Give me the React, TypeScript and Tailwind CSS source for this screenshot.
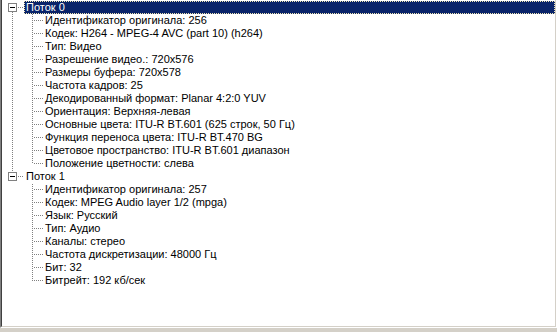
import React from "react";

type Node = { label: string; children: string[] };

const data: Node[] = [
  {
    label: "Поток 0",
    children: [
      "Идентификатор оригинала: 256",
      "Кодек: H264 - MPEG-4 AVC (part 10) (h264)",
      "Тип: Видео",
      "Разрешение видео.: 720x576",
      "Размеры буфера: 720x578",
      "Частота кадров: 25",
      "Декодированный формат: Planar 4:2:0 YUV",
      "Ориентация: Верхняя-левая",
      "Основные цвета: ITU-R BT.601 (625 строк, 50 Гц)",
      "Функция переноса цвета: ITU-R BT.470 BG",
      "Цветовое пространство: ITU-R BT.601 диапазон",
      "Положение цветности: слева",
    ],
  },
  {
    label: "Поток 1",
    children: [
      "Идентификатор оригинала: 257",
      "Кодек: MPEG Audio layer 1/2 (mpga)",
      "Язык: Русский",
      "Тип: Аудио",
      "Каналы: стерео",
      "Частота дискретизации: 48000 Гц",
      "Бит: 32",
      "Битрейт: 192 кб/сек",
    ],
  },
];

const ROW_H = 13;
const LINE = "#808080";

function vDots(x: number, y0: number, y1: number, rowTop: number, key: string) {
  const out: React.ReactElement[] = [];
  for (let y = y0; y < y1; y++) {
    if ((rowTop + y) % 2 === 0) out.push(<rect key={key + y} x={x} y={y} width={1} height={1} fill={LINE} />);
  }
  return out;
}

function hDots(y: number, x0: number, x1: number, key: string) {
  const out: React.ReactElement[] = [];
  for (let x = x0; x < x1; x++) {
    if (x % 2 === 0) out.push(<rect key={key + x} x={x} y={y} width={1} height={1} fill={LINE} />);
  }
  return out;
}

function RootRow({ label, first, last, selected, rowTop }: { label: string; first: boolean; last: boolean; selected: boolean; rowTop: number }) {
  return (
    <div className="flex h-[13px] items-stretch">
      <svg width={22} height={ROW_H} className="shrink-0" shapeRendering="crispEdges">
        {!first && vDots(10, 0, 2, rowTop, "a")}
        {!last && vDots(10, 11, 13, rowTop, "b")}
        <rect x={6.5} y={2.5} width={8} height={8} fill="#fff" stroke={LINE} strokeWidth={1} />
        <rect x={8} y={6} width={5} height={1} fill="#000" />
        {hDots(6, 16, 22, "h")}
      </svg>
      {selected ? (
        <div className="flex flex-1 items-center bg-[#0a246a] pl-[2px] text-white outline-1 -outline-offset-1 outline-dotted outline-[#f0e6b4]">
          {label}
        </div>
      ) : (
        <div className="flex items-center pl-[2px] text-black">{label}</div>
      )}
    </div>
  );
}

function ChildRow({ label, parentLast, last, rowTop }: { label: string; parentLast: boolean; last: boolean; rowTop: number }) {
  return (
    <div className="flex h-[13px] items-stretch">
      <svg width={43} height={ROW_H} className="shrink-0" shapeRendering="crispEdges">
        {!parentLast && vDots(10, 0, 13, rowTop, "r")}
        {vDots(30, 0, last ? 7 : 13, rowTop, "c")}
        {hDots(6, 31, 41, "h")}
      </svg>
      <div className="flex items-center whitespace-nowrap text-black">{label}</div>
    </div>
  );
}

export default function App() {
  let row = 0;
  return (
    <div
      className="h-[332px] w-[557px] overflow-hidden bg-[#d4d0c8] text-[11px] leading-[13px]"
      style={{ fontFamily: '"Liberation Sans", Arial, sans-serif' }}
    >
      <div className="h-[328px] w-[557px] border-b border-l border-r border-b-white border-l-[#808080] border-r-white">
        <div className="flex h-full flex-col border-b border-l border-r border-b-[#d4d0c8] border-l-[#404040] border-r-[#d4d0c8] bg-white pt-[1px]">
          {data.map((n, i) => {
            const rootTop = 1 + ROW_H * row++;
            return (
              <div key={n.label} className="flex flex-col">
                <RootRow
                  label={n.label}
                  first={i === 0}
                  last={i === data.length - 1}
                  selected={i === 0}
                  rowTop={rootTop}
                />
                {n.children.map((c, j) => {
                  const top = 1 + ROW_H * row++;
                  return (
                    <ChildRow
                      key={c}
                      label={c}
                      parentLast={i === data.length - 1}
                      last={j === n.children.length - 1}
                      rowTop={top}
                    />
                  );
                })}
              </div>
            );
          })}
        </div>
      </div>
    </div>
  );
}
